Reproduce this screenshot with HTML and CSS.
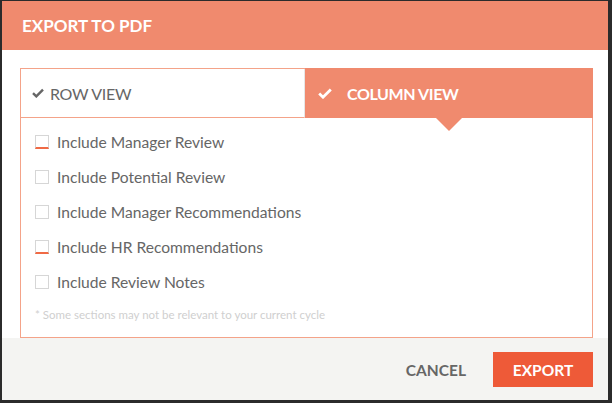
FILE: index.html
```html
<!DOCTYPE html>
<html>
<head>
<meta charset="utf-8">
<link rel="stylesheet" href="styles.css">
</head>
<body>
<div class="dialog">
  <div class="header">EXPORT TO PDF</div>
  <div class="body">
    <div class="box">
      <div class="tabs">
        <div class="tab tab-row">
          <svg class="check" viewBox="0 0 12 10" width="12" height="10"><path d="M1 5.2 L4.3 8.4 L11 1.6" fill="none" stroke="#666" stroke-width="2.4"/></svg>
          <span>ROW VIEW</span>
        </div>
        <div class="tab tab-col">
          <svg class="check" viewBox="0 0 14 11" width="14" height="11"><path d="M1.2 5.6 L5 9.2 L12.8 1.6" fill="none" stroke="#fff" stroke-width="2.8"/></svg>
          <span>COLUMN VIEW</span>
        </div>
      </div>
      <ul class="options">
        <li><span class="cb cb-mark"></span>Include Manager Review</li>
        <li><span class="cb"></span>Include Potential Review</li>
        <li><span class="cb"></span>Include Manager Recommendations</li>
        <li><span class="cb cb-mark"></span>Include HR Recommendations</li>
        <li><span class="cb"></span>Include Review Notes</li>
      </ul>
      <p class="note">* Some sections may not be relevant to your current cycle</p>
    </div>
  </div>
  <div class="footer">
    <button class="btn-cancel">CANCEL</button>
    <button class="btn-export">EXPORT</button>
  </div>
</div>
</body>
</html>
```
FILE: styles.css
```css
html, body {
  margin: 0;
  padding: 0;
  background: #2b2b2b;
}
body {
  font-family: Lato, "Open Sans", sans-serif;
  width: 612px;
  height: 403px;
  overflow: hidden;
}
*, *::before, *::after { box-sizing: border-box; }
.dialog {
  margin: 1px 4px 0 2px;
  width: 606px;
  height: 399px;
  background: #fff;
  display: flex;
  flex-direction: column;
}
.header {
  height: 49px;
  flex: 0 0 49px;
  background: #f08a6e;
  color: #fff;
  font-weight: 700;
  font-size: 17px;
  display: flex;
  align-items: center;
  padding-left: 20px;
}
.body {
  padding: 18px 15px 0 18px;
  flex: 1;
  display: flex;
}
.box {
  flex: 1;
  border: 1px solid #f4a389;
  display: flex;
  flex-direction: column;
}
.tabs {
  display: flex;
  height: 49px;
  flex: 0 0 49px;
}
.tab {
  display: flex;
  align-items: center;
  font-size: 16px;
}
.tab-row {
  flex: 0 0 284px;
  border-bottom: 1px solid #f4a389;
  border-right: 1px solid #e6e6e6;
  color: #666;
  padding-left: 11px;
  gap: 6px;
}
.tab-row span { letter-spacing: -0.3px; }
.tab-col {
  flex: 1;
  background: #f08a6e;
  color: #fff;
  font-weight: 700;
  padding-left: 13px;
  gap: 15px;
  position: relative;
  margin-top: -1px;
  margin-right: -1px;
}
.tab-col span { letter-spacing: -0.4px; }
.tab-col::after {
  content: "";
  position: absolute;
  left: 131px;
  top: 100%;
  border-left: 13px solid transparent;
  border-right: 13px solid transparent;
  border-top: 13px solid #f08a6e;
}
.options {
  list-style: none;
  margin: 0;
  padding: 6px 0 0 14px;
}
.options li {
  height: 35px;
  display: flex;
  align-items: center;
  gap: 8px;
  font-size: 15.6px;
  color: #666;
}
.cb {
  width: 14px;
  height: 14px;
  border: 1px solid #d6d6d6;
  background: #fff;
  flex: 0 0 auto;
}
.cb-mark {
  border-bottom: 2px solid #f06a45;
}
.note {
  margin: 8px 0 0 14px;
  font-size: 11.5px;
  line-height: 16px;
  color: #cfcfcf;
}
.footer {
  height: 62px;
  flex: 0 0 62px;
  background: #f4f4f2;
  display: flex;
  align-items: flex-start;
  justify-content: flex-end;
  padding: 14px 15px 0 0;
}
button {
  font-family: Lato, "Open Sans", sans-serif;
  font-weight: 700;
  font-size: 15.5px;
  border: none;
  cursor: pointer;
  padding: 0;
}
.btn-cancel {
  background: transparent;
  color: #666;
  height: 35px;
  margin-right: 27px;
}
.btn-export {
  background: #ee5a38;
  color: #fff;
  width: 100px;
  height: 35px;
}
```
